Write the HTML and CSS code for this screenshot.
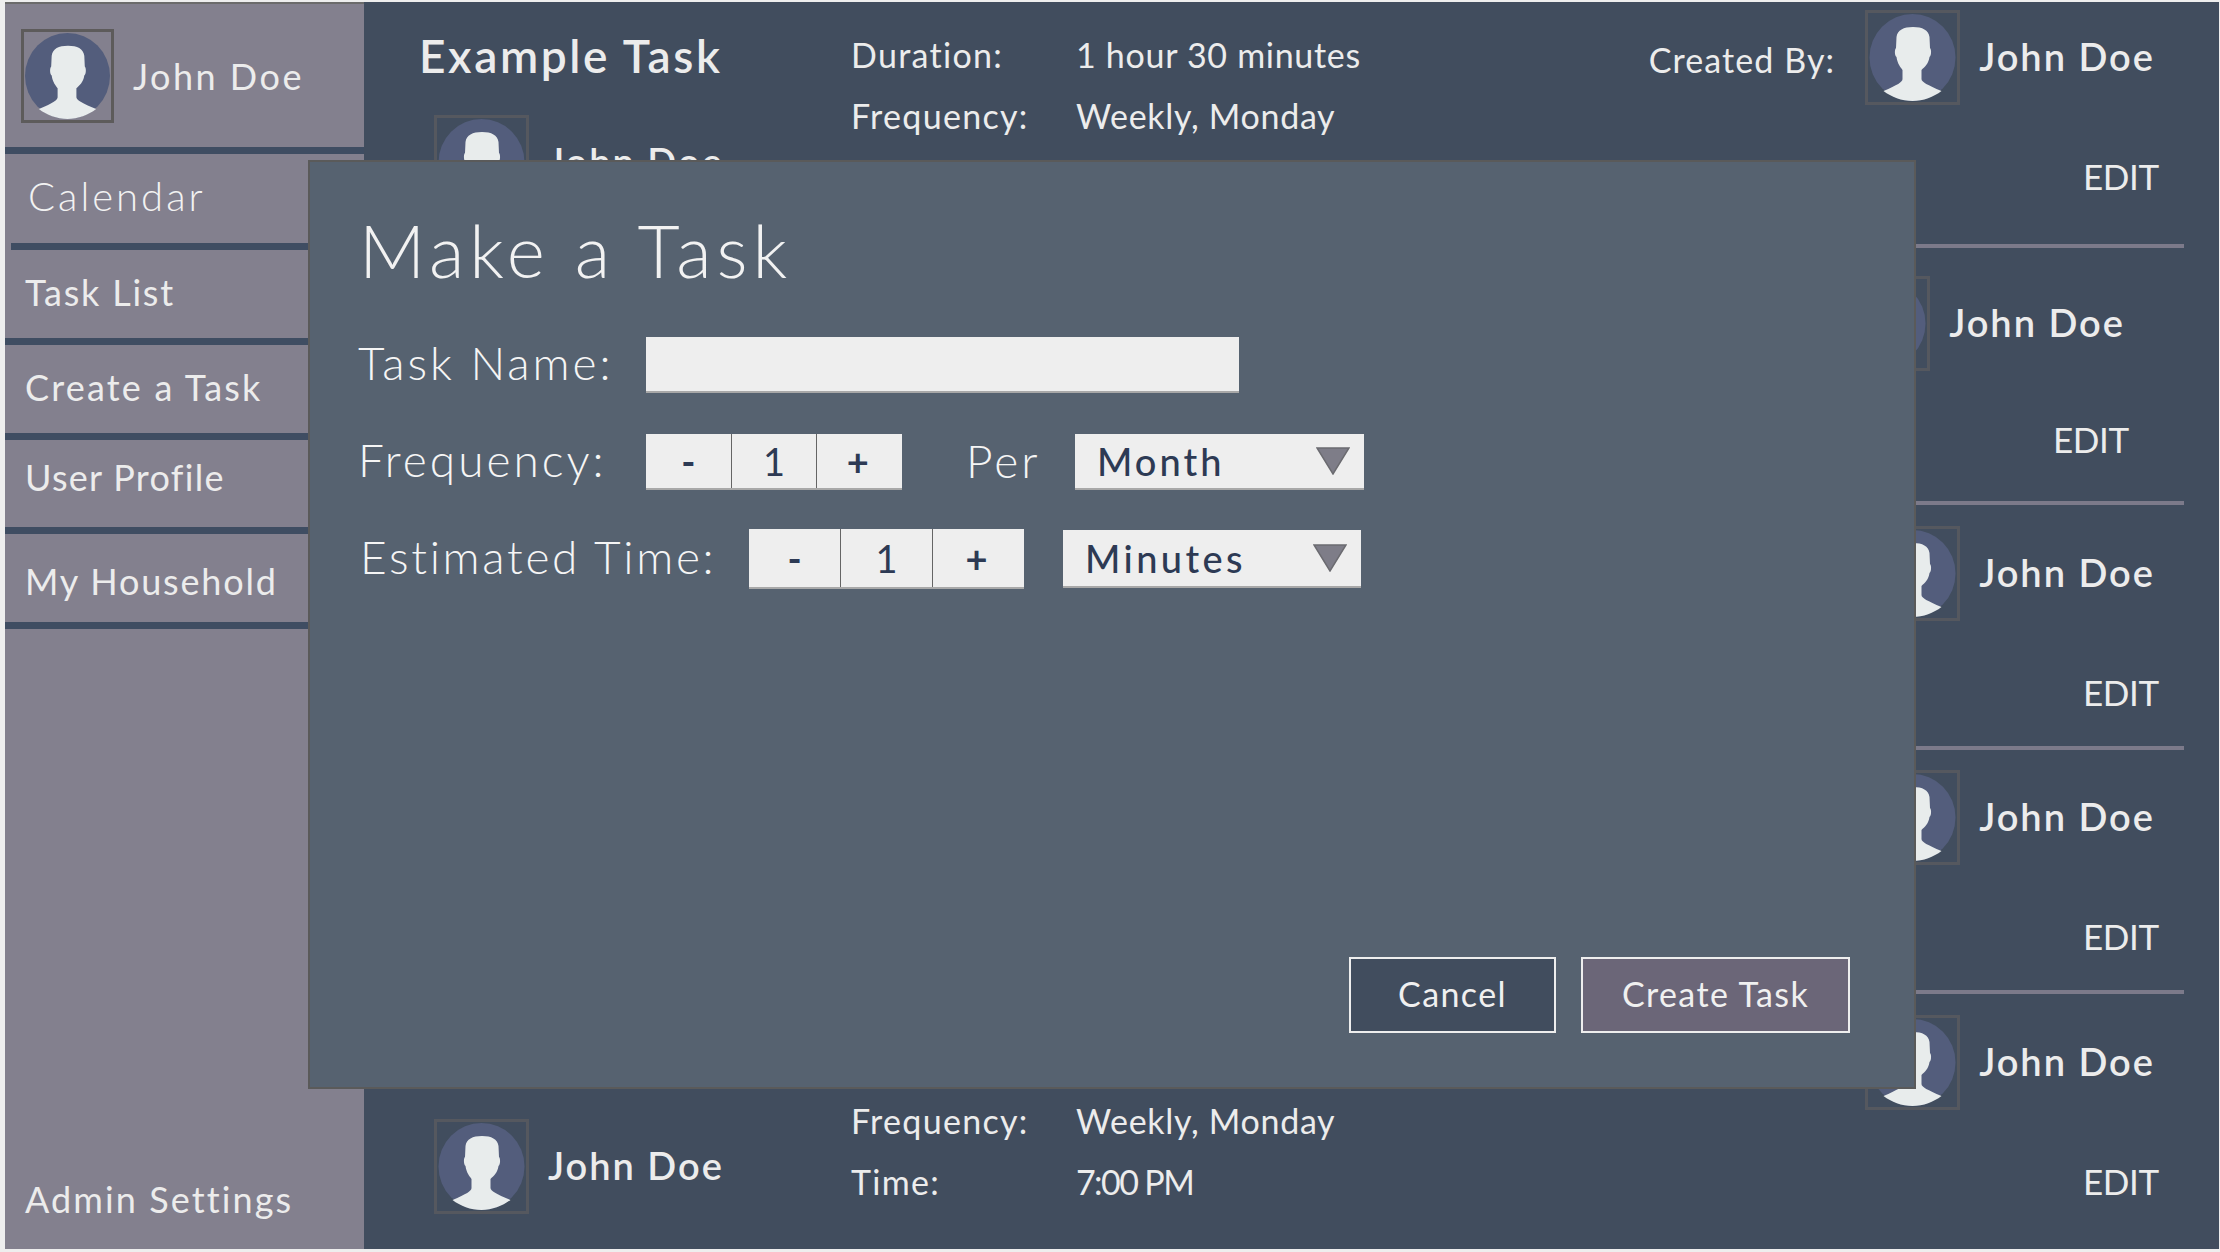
FILE: index.html
```html
<!DOCTYPE html>
<html lang="en">
<head>
    <meta charset="UTF-8">
    <meta name="viewport" content="width=device-width, initial-scale=1.0">
    <title>Make a Task</title>
    <link rel="stylesheet" href="styles.css">
</head>
<body>
<svg class="defs" width="0" height="0">
  <symbol id="person" viewBox="0 0 86 87">
    <ellipse cx="43" cy="43.5" rx="43" ry="43.5" fill="#535d7c"/>
    <path fill="#e8ecec" d="M43.5 13C34 13 28 16 27 23L26.5 34C25 35 25 42 27 43C28 50 31 53 33 56L33 65C33 68 28 71 14 77C22 83 32 87 43 87C54 87 64 83 72 77C58 71 52 68 52 65L52 56C55 53 59 50 60 43C62 42 62 35 60.5 34L60 23C59 16 53 13 43.5 13Z"/>
  </symbol>
</svg>

<div class="app">
  <div class="sidebar">
    <div class="profile">
      <div class="avatar avatar-side"><svg><use href="#person"/></svg></div>
      <span>John Doe</span>
    </div>
    <div class="side-rule"></div>
    <a class="side-link side-calendar">Calendar</a>
    <div class="side-rule side-rule-short"></div>
    <a class="side-link side-tasks">Task List</a>
    <div class="side-rule"></div>
    <a class="side-link">Create a Task</a>
    <div class="side-rule"></div>
    <a class="side-link side-up">User Profile</a>
    <div class="side-rule"></div>
    <a class="side-link side-down">My Household</a>
    <div class="side-rule"></div>
    <a class="side-link side-admin">Admin Settings</a>
  </div>

  <!-- only what shows around the dialog is kept in these rows -->
  <div class="main">
    <div class="task task-1">
      <div class="task-left">
        <div class="task-title">Example Task</div>
        <div class="person person-assigned">
          <div class="avatar"><svg><use href="#person"/></svg></div>
          <span class="person-name">John Doe</span>
        </div>
      </div>
      <div class="task-when">
        <div><span class="when-label">Duration:</span>1 hour 30 minutes</div>
        <div><span class="when-label">Frequency:</span>Weekly, Monday</div>
      </div>
      <div class="task-right">
        <div class="person">
          <span class="created">Created By:</span>
          <div class="avatar"><svg><use href="#person"/></svg></div>
          <span class="person-name">John Doe</span>
        </div>
        <a class="edit">EDIT</a>
      </div>
    </div>

    <div class="task task-2">
      <div class="task-right">
        <div class="person">
          <div class="avatar"><svg><use href="#person"/></svg></div>
          <span class="person-name">John Doe</span>
        </div>
        <a class="edit">EDIT</a>
      </div>
    </div>

    <div class="task task-3">
      <div class="task-right">
        <div class="person">
          <div class="avatar"><svg><use href="#person"/></svg></div>
          <span class="person-name">John Doe</span>
        </div>
        <a class="edit">EDIT</a>
      </div>
    </div>

    <div class="task task-4">
      <div class="task-right">
        <div class="person">
          <div class="avatar"><svg><use href="#person"/></svg></div>
          <span class="person-name">John Doe</span>
        </div>
        <a class="edit">EDIT</a>
      </div>
    </div>

    <div class="task task-5">
      <div class="task-left">
        <div class="person person-assigned">
          <div class="avatar"><svg><use href="#person"/></svg></div>
          <span class="person-name">John Doe</span>
        </div>
      </div>
      <div class="task-when">
        <div><span class="when-label">Frequency:</span>Weekly, Monday</div>
        <div><span class="when-label">Time:</span><span class="when-time">7:00 PM</span></div>
      </div>
      <div class="task-right">
        <div class="person">
          <div class="avatar"><svg><use href="#person"/></svg></div>
          <span class="person-name">John Doe</span>
        </div>
        <a class="edit">EDIT</a>
      </div>
    </div>
  </div>
</div>

<div class="modal">
  <h1>Make a Task</h1>

  <div class="field field-name">
    <label class="field-label">Task Name:</label>
    <input class="name-input" type="text">
  </div>

  <div class="field field-freq">
    <label class="field-label">Frequency:</label>
    <div class="stepper">
      <div class="step step-sign">-</div>
      <div class="step">1</div>
      <div class="step step-sign">+</div>
    </div>
    <span class="per">Per</span>
    <div class="dropdown">
      <span>Month</span>
      <svg class="arrow" viewBox="0 0 34 28"><polygon points="1,1 33,1 17,27" fill="#7e7d88" stroke="#6b6b70" stroke-width="1.5"/></svg>
    </div>
  </div>

  <div class="field field-time">
    <label class="field-label">Estimated Time:</label>
    <div class="stepper">
      <div class="step step-sign">-</div>
      <div class="step">1</div>
      <div class="step step-sign">+</div>
    </div>
    <div class="dropdown">
      <span>Minutes</span>
      <svg class="arrow" viewBox="0 0 34 28"><polygon points="1,1 33,1 17,27" fill="#7e7d88" stroke="#6b6b70" stroke-width="1.5"/></svg>
    </div>
  </div>

  <div class="modal-actions">
    <button class="btn btn-cancel">Cancel</button>
    <button class="btn btn-create">Create Task</button>
  </div>
</div>
</body>
</html>
```

FILE: styles.css
```css
* { box-sizing: border-box; }

body {
  margin: 0;
  height: 1252px;
  overflow: hidden;
  background-color: #eeeeee;
  font-family: "Lato", "Open Sans", sans-serif;
  color: #ececec;
}

.defs { display: block; height: 0; }

.app {
  display: flex;
  height: 1249px;
  margin: 0 1px 0 5px;
  padding-top: 2px;
}

/* Sidebar */
.sidebar {
  display: flex;
  flex-direction: column;
  width: 359px;
  background-color: #83808e;
  border-top: 2px solid #6b6b6b;
  font-size: 36px;
  font-weight: 400;
  letter-spacing: 2.2px;
}

.profile {
  display: flex;
  align-items: center;
  gap: 19px;
  height: 143px;
  padding-left: 16px;
  letter-spacing: 2.5px;
}

.side-rule { height: 7px; background-color: #3f4d62; }
.side-rule-short { margin-left: 6px; }

.side-link {
  display: flex;
  align-items: center;
  height: 88px;
  padding-left: 20px;
  padding-bottom: 5px;
}

.side-calendar { height: 89px; padding-left: 23px; font-size: 40px; font-weight: 300; letter-spacing: 3px; color: #f2f2f2; }
.side-tasks { letter-spacing: 1.8px; }
.side-up { height: 87px; padding-bottom: 13px; letter-spacing: 1.3px; }
.side-down { padding-bottom: 0; padding-top: 6px; letter-spacing: 1.8px; }
.side-admin { margin-top: auto; height: 100px; padding-bottom: 0; letter-spacing: 2.1px; }

/* Task list behind the dialog */
.main {
  flex: 1;
  background-color: #414d5e;
  padding-right: 35px;
  overflow: hidden;
}

.task {
  display: flex;
  border-bottom: 4px solid #7c7a8a;
}

.task-1 { height: 246px; padding-top: 8px; }
.task-2 { height: 257px; padding-top: 28px; }
.task-3 { height: 245px; padding-top: 21px; }
.task-4 { height: 244px; padding-top: 20px; }
.task-5 { height: 255px; padding-top: 21px; border-bottom: none; }

.task-left { width: 487px; padding-left: 55px; }

.task-title {
  height: 60px;
  margin-top: 16px;
  margin-bottom: 29px;
  line-height: 60px;
  font-size: 46px;
  font-weight: 600;
  letter-spacing: 2.6px;
}

.person {
  display: flex;
  align-items: center;
  gap: 19px;
}

.person-assigned { margin-left: 15px; }
.task-5 .person-assigned { margin-top: 104px; }

.person-name {
  padding-bottom: 4px;
  font-size: 38px;
  font-weight: 600;
  letter-spacing: 2px;
}

.avatar {
  flex: none;
  width: 95px;
  height: 95px;
  padding: 1px;
  border: 3px solid #55585f;
}

.avatar svg { display: block; width: 100%; height: 100%; }

.avatar-side { width: 93px; height: 94px; border-color: #5d5b5b; }

.task-when {
  flex: 1;
  padding-top: 15px;
  font-size: 34px;
  line-height: 60.5px;
  letter-spacing: 0.7px;
}

.task-5 .task-when { padding-top: 76px; }

.when-label { display: inline-block; width: 225px; letter-spacing: 1.3px; }
.when-time { letter-spacing: -1.6px; }

.task-right {
  display: flex;
  flex-direction: column;
  align-items: flex-end;
  margin-left: auto;
  padding-right: 25px;
}

.task-2 .task-right { padding-right: 55px; }

.task-right .person { padding-right: 4px; }

.created { font-size: 34px; margin-right: 11px; letter-spacing: 1.1px; padding-top: 4px; }

.edit {
  margin-top: 50px;
  line-height: 42px;
  font-size: 35px;
  letter-spacing: -0.3px;
}

.task-2 .edit { margin-top: 47px; }

/* Dialog */
.modal {
  position: absolute;
  left: 308px;
  top: 160px;
  display: flex;
  flex-direction: column;
  width: 1608px;
  height: 929px;
  padding: 38px 64px 54px 48px;
  background-color: #566270;
  border: 2px solid #5a5a5a;
}

.modal h1 {
  margin: 0 0 37px 1px;
  line-height: 100px;
  font-size: 73px;
  font-weight: 300;
  letter-spacing: 5px;
  color: #f2f2f2;
}

.field {
  display: flex;
  align-items: center;
  font-size: 46px;
  font-weight: 300;
  letter-spacing: 3px;
  color: #f5f5f5;
}

.field-name { height: 56px; margin-bottom: 41px; }
.field-freq { height: 56px; margin-bottom: 39px; }
.field-time { height: 60px; letter-spacing: 2.7px; }

.field-label { flex: none; width: 288px; padding-bottom: 5px; }
.field-time .field-label { width: 391px; padding-left: 2px; }

.name-input {
  width: 593px;
  height: 56px;
  padding: 0 12px;
  background-color: #eeeeee;
  border: none;
  border-bottom: 2px solid #a8a8a8;
}

.stepper {
  display: flex;
  gap: 1px;
  background-color: #656565;
  border-bottom: 2px solid #a8a8a8;
  width: 256px;
  height: 56px;
}

.field-time .stepper { width: 275px; height: 60px; }

.step {
  flex: 1;
  display: flex;
  align-items: center;
  justify-content: center;
  background-color: #eeeeee;
  color: #2d3a54;
  font-size: 38px;
  font-weight: 400;
  letter-spacing: 0;
}

.step-sign { font-weight: 700; }
.step:last-child { letter-spacing: 4px; }

.per { width: 109px; margin-left: 64px; padding-bottom: 3px; }

.dropdown {
  display: flex;
  align-items: center;
  justify-content: space-between;
  width: 289px;
  height: 56px;
  padding: 0 14px 0 22px;
  background-color: #eeeeee;
  border-bottom: 2px solid #a8a8a8;
  color: #2d3a54;
  font-size: 38px;
  font-weight: 500;
  letter-spacing: 3px;
}

.field-time .dropdown { width: 298px; height: 58px; margin-left: 39px; letter-spacing: 3.4px; }

.arrow { display: block; width: 34px; height: 28px; }

.modal-actions {
  display: flex;
  justify-content: flex-end;
  gap: 25px;
  margin-top: auto;
}

.btn {
  height: 76px;
  padding-bottom: 4px;
  font-family: inherit;
  font-size: 34px;
  font-weight: 400;
  letter-spacing: 1.4px;
  color: #f0f0f0;
  border: 2px solid #eeeeee;
}

.btn-cancel { width: 207px; background-color: #414d5e; }
.btn-create { width: 269px; background-color: #6b6678; }
```
